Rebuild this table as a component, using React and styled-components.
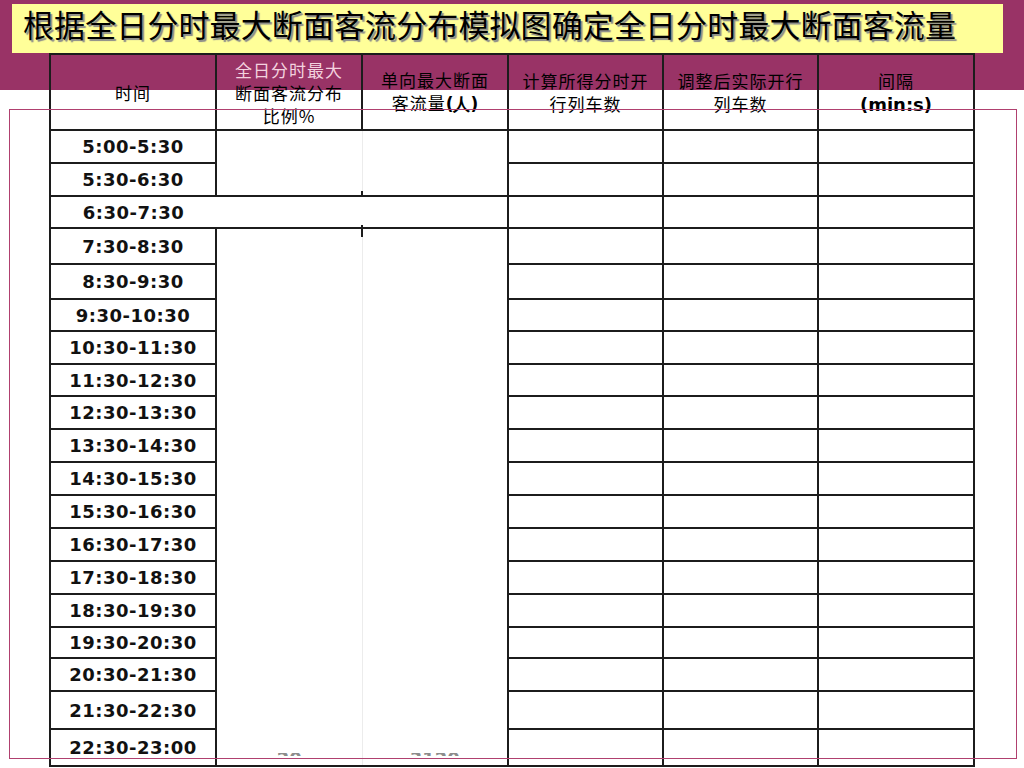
import React from 'react';
import styled, { createGlobalStyle } from 'styled-components';

const GlobalStyle = createGlobalStyle`
  html, body {
    margin: 0;
    padding: 0;
    background: #ffffff;
  }
  body {
    font-family: "Noto Sans CJK SC", "DejaVu Sans", sans-serif;
    overflow: hidden;
  }
`;

const Slide = styled.div`
  position: relative;
  width: 1024px;
  height: 768px;
  overflow: hidden;
  background: linear-gradient(#993366 0, #993366 90px, #ffffff 90px);
`;

const TitleBox = styled.div`
  margin: 4px 0 0 12px;
  width: 991px;
  height: 49px;
  box-sizing: border-box;
  padding: 0 0 0 11px;
  background: #ffff99;
  display: flex;
  align-items: center;
`;

const Title = styled.h1`
  margin: -9px 0 0 0;
  font-family: "Noto Sans CJK SC", sans-serif;
  font-weight: 400;
  font-size: 31px;
  letter-spacing: 0.1px;
  line-height: 40px;
  color: #000000;
  text-shadow: 2px 2px 1px #8a8a8a;
  white-space: nowrap;
`;

const Grid = styled.table`
  margin-left: 49px;
  width: 924px;
  border-collapse: collapse;
  table-layout: fixed;
  color: #111111;
`;

const HeadCell = styled.th`
  height: 74px;
  padding: 0;
  border: 2px solid #1c1c1c;
  font-family: "Noto Sans CJK SC", sans-serif;
  font-weight: 400;
  font-size: 17px;
  letter-spacing: 1px;
  line-height: 23px;
  text-align: center;
  vertical-align: middle;
  color: #000000;
`;

const Light = styled.span`
  color: ${(p) => (p.$light ? '#f3d2df' : 'inherit')};
`;

const Latin = styled.b`
  font-family: "DejaVu Sans", Verdana, sans-serif;
  font-weight: 700;
  font-size: ${(p) => p.$size || 17}px;
  letter-spacing: 0;
`;

const Row = styled.tr`
  height: ${(p) => p.$h}px;
`;

const TimeCell = styled.td`
  padding: 0;
  border: 2px solid #1c1c1c;
  border-right: ${(p) => (p.$open ? 'none' : '2px solid #1c1c1c')};
  font-family: "DejaVu Sans", Verdana, sans-serif;
  font-weight: 700;
  font-size: 18px;
  letter-spacing: 0.5px;
  text-align: center;
  vertical-align: middle;
  color: #111111;
  white-space: nowrap;
`;

const Cell = styled.td`
  padding: 0;
  border: 2px solid #1c1c1c;
`;

const MergedCell = styled.td`
  position: relative;
  padding: 0;
  border-top: 2px solid #1c1c1c;
  border-bottom: 2px solid #1c1c1c;
  border-left: ${(p) => (p.$side === 'left' ? '2px solid #1c1c1c' : '1px solid #ececec')};
  border-right: ${(p) => (p.$side === 'right' ? '2px solid #1c1c1c' : '1px solid #ececec')};
  text-align: center;
  vertical-align: bottom;
`;

const OpenCell = styled.td`
  position: relative;
  padding: 0;
  border-top: 2px solid #1c1c1c;
  border-bottom: 2px solid #1c1c1c;
  border-left: none;
  border-right: 2px solid #1c1c1c;
`;

const Tick = styled.span`
  position: absolute;
  left: ${(p) => p.$x}px;
  top: ${(p) => p.$top}px;
  width: 2px;
  height: ${(p) => p.$len}px;
  background: #1c1c1c;
`;

/* numbers that sit below the visible part of the merged cell: only their tops show */
const Hidden = styled.div`
  height: 3px;
  margin-bottom: 9px;
  overflow: hidden;
  font-family: "DejaVu Sans", Verdana, sans-serif;
  font-weight: 700;
  font-size: 18px;
  line-height: 12px;
  color: #8c8c8c;
`;

const Frame = styled.div`
  position: absolute;
  left: 9px;
  top: 109px;
  width: 1008px;
  height: 650px;
  box-sizing: border-box;
  border: 1px solid #b0406f;
  pointer-events: none;
`;

const rows = [
  ['5:00-5:30', 33],
  ['5:30-6:30', 33],
  ['6:30-7:30', 32],
  ['7:30-8:30', 36],
  ['8:30-9:30', 35],
  ['9:30-10:30', 32],
  ['10:30-11:30', 33],
  ['11:30-12:30', 32],
  ['12:30-13:30', 33],
  ['13:30-14:30', 33],
  ['14:30-15:30', 33],
  ['15:30-16:30', 33],
  ['16:30-17:30', 33],
  ['17:30-18:30', 33],
  ['18:30-19:30', 33],
  ['19:30-20:30', 31],
  ['20:30-21:30', 33],
  ['21:30-22:30', 38],
  ['22:30-23:00', 37],
];

function ShareCells({ index }) {
  // the middle two columns are merged in three blocks
  if (index === 0) {
    return (
      <>
        <MergedCell rowSpan={2} $side="left" />
        <MergedCell rowSpan={2} $side="right" />
      </>
    );
  }
  if (index === 2) {
    return (
      <OpenCell colSpan={2}>
        <Tick $x={-1} $top={-9} $len={9} />
        <Tick $x={145} $top={-6} $len={6} />
        <Tick $x={145} $top={28} $len={12} />
      </OpenCell>
    );
  }
  if (index === 3) {
    return (
      <>
        <MergedCell rowSpan={16} $side="left">
          <Hidden>20</Hidden>
        </MergedCell>
        <MergedCell rowSpan={16} $side="right">
          <Hidden>3120</Hidden>
        </MergedCell>
      </>
    );
  }
  return null;
}

export default function App() {
  return (
    <Slide>
      <GlobalStyle />
      <TitleBox>
        <Title>根据全日分时最大断面客流分布模拟图确定全日分时最大断面客流量</Title>
      </TitleBox>
      <Grid>
        <colgroup>
          <col style={{ width: 166 }} />
          <col style={{ width: 146 }} />
          <col style={{ width: 146 }} />
          <col style={{ width: 155 }} />
          <col style={{ width: 155 }} />
          <col style={{ width: 156 }} />
        </colgroup>
        <thead>
          <tr>
            <HeadCell>时间</HeadCell>
            <HeadCell>
              <Light $light>全日分时最大</Light>
              <br />
              断面客流分布
              <br />
              比例%
            </HeadCell>
            <HeadCell>
              单向最大断面
              <br />
              客流量<Latin>(人)</Latin>
            </HeadCell>
            <HeadCell>
              计算所得分时开
              <br />
              行列车数
            </HeadCell>
            <HeadCell>
              调整后实际开行
              <br />
              列车数
            </HeadCell>
            <HeadCell>
              间隔
              <br />
              <Latin $size={18}>(min:s)</Latin>
            </HeadCell>
          </tr>
        </thead>
        <tbody>
          {rows.map(([time, h], i) => (
            <Row key={time} $h={h}>
              <TimeCell $open={i === 2}>{time}</TimeCell>
              <ShareCells index={i} />
              <Cell />
              <Cell />
              <Cell />
            </Row>
          ))}
        </tbody>
      </Grid>
      <Frame />
    </Slide>
  );
}
